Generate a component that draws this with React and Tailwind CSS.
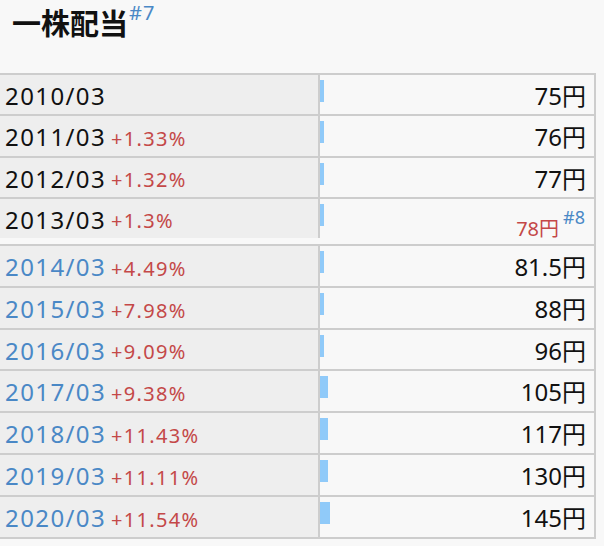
const rows = [
  { year: "2010/03", pct: null, value: "75円", bar: 4, blue: false, h: "h-[41px]" },
  { year: "2011/03", pct: "+1.33%", value: "76円", bar: 4, blue: false, h: "h-[42px]" },
  { year: "2012/03", pct: "+1.32%", value: "77円", bar: 4, blue: false, h: "h-[41px]" },
  { year: "2013/03", pct: "+1.3%", value: "78円", bar: 4, blue: false, h: "h-[47px]", note: "#8" },
  { year: "2014/03", pct: "+4.49%", value: "81.5円", bar: 4, blue: true, h: "h-[42px]" },
  { year: "2015/03", pct: "+7.98%", value: "88円", bar: 4, blue: true, h: "h-[42px]" },
  { year: "2016/03", pct: "+9.09%", value: "96円", bar: 4, blue: true, h: "h-[41px]" },
  { year: "2017/03", pct: "+9.38%", value: "105円", bar: 8, blue: true, h: "h-[42px]" },
  { year: "2018/03", pct: "+11.43%", value: "117円", bar: 8, blue: true, h: "h-[42px]" },
  { year: "2019/03", pct: "+11.11%", value: "130円", bar: 8, blue: true, h: "h-[42px]" },
  { year: "2020/03", pct: "+11.54%", value: "145円", bar: 10, blue: true, h: "h-[42px]" },
];

function Row({ row }) {
  const tall = !!row.note;
  return (
    <div className={`flex border-b-2 border-[#cdcdcd] ${row.h} ${tall ? "items-start" : ""}`}>
      <div
        className={`w-[320px] shrink-0 bg-[#eeeeee] border-r-2 border-[#cdcdcd] flex items-center pl-[5px] pt-[2px] ${
          tall ? "h-[39px]" : "h-full"
        }`}
      >
        <span className={`text-[24px] tracking-[1.4px] ${row.blue ? "text-[#4a88c6]" : "text-[#111]"}`}>
          {row.year}
        </span>
        {row.pct && (
          <span className="ml-[5px] text-[20px] tracking-[1.3px] text-[#c44848] pt-[3px]">{row.pct}</span>
        )}
      </div>
      <div className="flex-1 flex h-full">
        <div className="mt-[5px] h-[22px] bg-[#90caf9]" style={{ width: row.bar }} />
        {tall ? (
          <div className="ml-auto pr-[9px] self-end pb-[5px] leading-none">
            <span className="text-[20px] text-[#c44848]">{row.value}</span>
            <sup className="ml-[4px] text-[18px] text-[#4a88c6] top-[-0.65em]">{row.note}</sup>
          </div>
        ) : (
          <div className="ml-auto pr-[8px] self-center pt-[2px] text-[24px] text-[#111]">{row.value}</div>
        )}
      </div>
    </div>
  );
}

export default function App() {
  return (
    <div
      className="w-[604px] h-[546px] bg-[#f8f8f8] overflow-hidden"
      style={{ fontFamily: '"Noto Sans", "Noto Sans CJK JP", sans-serif' }}
    >
      <div className="h-[73px] pl-[12px] pt-[1px]">
        <span className="text-[29px] font-bold text-[#111]" style={{ fontFamily: '"Noto Sans CJK JP", sans-serif' }}>
          一株配当
        </span>
        <sup className="ml-[1px] text-[20px] tracking-[1px] text-[#4a88c6] top-[-0.75em]">#7</sup>
      </div>
      <div className="w-[596px] border-t-2 border-r-2 border-[#cdcdcd]">
        {rows.map((r) => (
          <Row key={r.year} row={r} />
        ))}
      </div>
    </div>
  );
}
